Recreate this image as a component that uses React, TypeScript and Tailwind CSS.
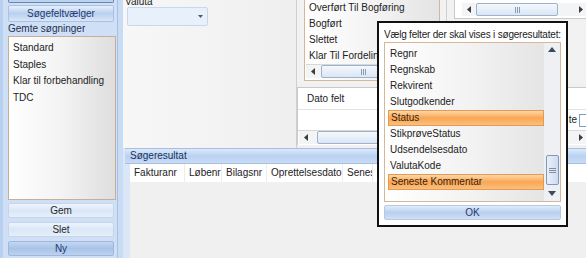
import React from 'react';

// Saved searches in the left panel
const savedSearches = ['Standard', 'Staples', 'Klar til forbehandling', 'TDC'];

const statusItems = ['Overført Til Bogføring', 'Bogført', 'Slettet', 'Klar Til Fordeling'];

const pickerFields = [
  { name: 'Regnr', selected: false },
  { name: 'Regnskab', selected: false },
  { name: 'Rekvirent', selected: false },
  { name: 'Slutgodkender', selected: false },
  { name: 'Status', selected: true },
  { name: 'StikprøveStatus', selected: false },
  { name: 'Udsendelsesdato', selected: false },
  { name: 'ValutaKode', selected: false },
  { name: 'Seneste Kommentar', selected: true },
];

// last column is clipped by the picker dialog on top of it
const resultColumns = [
  { label: 'Fakturanr', width: 'w-[55px]' },
  { label: 'Løbenr', width: 'w-[37px]' },
  { label: 'Bilagsnr', width: 'w-[45px]' },
  { label: 'Oprettelsesdato', width: 'w-[76px]' },
  { label: 'Seneste', width: 'w-[30px]' },
];

const ArrowLeft = () => (
  <svg width="5" height="7" viewBox="0 0 5 7">
    <path d="M4 0 L0 3.5 L4 7 Z" fill="#3c3c3c" />
  </svg>
);

const ArrowRight = () => (
  <svg width="5" height="7" viewBox="0 0 5 7">
    <path d="M1 0 L5 3.5 L1 7 Z" fill="#3c3c3c" />
  </svg>
);

const ArrowUp = () => (
  <svg width="8" height="5" viewBox="0 0 8 5">
    <path d="M0 5 L4 0 L8 5 Z" fill="#3c4a5c" />
  </svg>
);

const ArrowDown = () => (
  <svg width="8" height="5" viewBox="0 0 8 5">
    <path d="M0 0 L4 5 L8 0 Z" fill="#3c4a5c" />
  </svg>
);

// Horizontal scrollbar, thumb offset/width in px
const HScroll: React.FC<{ thumbLeft: number; thumbWidth: number; showRight?: boolean }> = ({
  thumbLeft,
  thumbWidth,
  showRight = true,
}) => (
  <div className="flex h-[13px] items-stretch bg-[#f3f4f6]">
    <div className="flex w-[14px] items-center justify-center">
      <ArrowLeft />
    </div>
    <div className="relative flex-1">
      <div
        className="absolute top-0 flex h-[13px] items-center justify-center rounded-[2px] border border-[#9fb2cc] bg-gradient-to-b from-[#f4f8fd] to-[#dbe6f4]"
        style={{ left: thumbLeft, width: thumbWidth }}
      >
        <div className="flex gap-[1px]">
          <div className="h-[6px] w-[1px] bg-[#8b9bb0]" />
          <div className="h-[6px] w-[1px] bg-[#8b9bb0]" />
          <div className="h-[6px] w-[1px] bg-[#8b9bb0]" />
        </div>
      </div>
    </div>
    {showRight && (
      <div className="flex w-[12px] items-center justify-center">
        <ArrowRight />
      </div>
    )}
  </div>
);

const SideButton: React.FC<{ label: string; dark?: boolean }> = ({ label, dark }) => (
  <div
    className={`flex h-[15px] items-center justify-center rounded-[2px] border ${
      dark
        ? 'border-[#9db8dc] bg-gradient-to-b from-[#c3d7f2] via-[#a9c3e8] to-[#bcd2ef] text-[#1f3a6e]'
        : 'border-[#c5d6ec] bg-gradient-to-b from-[#eef4fc] via-[#dae7f7] to-[#e7eff9] text-[#2a2a2a]'
    }`}
  >
    {label}
  </div>
);

const Sidebar = () => (
  <div className="flex w-[117px] shrink-0 flex-col border-l-[3px] border-[#b9d1f0] bg-[#cfe0f6] pl-[5px] pr-[1px]">
    <div className="mr-[2px] h-[3px] rounded-b-[2px] border-x border-b border-[#6a86ad] bg-[#bcd2ef]" />
    <div className="mr-[2px] mt-[2px] flex h-[17px] items-center justify-center rounded-[2px] border border-[#a9c1e3] bg-gradient-to-b from-[#e7f0fb] via-[#b9d0f0] to-[#d9e6f7] text-[#1f3a6e]">
      Søgefeltvælger
    </div>
    <div className="flex h-[14px] items-center text-[#1c2f4f]">Gemte søgninger</div>
    <div className="h-[164px] border border-[#c8ae94] bg-gradient-to-r from-[#ffffff] via-[#f3f3f3] to-[#dedede] pl-[4px] pt-[3px]">
      {savedSearches.map((s) => (
        <div key={s} className="flex h-[16.5px] items-center text-[#222]">
          {s}
        </div>
      ))}
    </div>
    <div className="mr-[2px] mt-[3px] flex flex-col gap-[4px]">
      <SideButton label="Gem" />
      <SideButton label="Slet" />
      <SideButton label="Ny" dark />
    </div>
  </div>
);

const TopForm = () => (
  <div className="flex h-[148px] shrink-0">
    {/* Valuta column */}
    <div className="w-[174px] shrink-0 border-r border-[#cfcfcf] bg-gradient-to-r from-[#f7f7f7] to-[#efefef] pl-[2px]">
      <div className="-mt-[3px] h-[10px] leading-[10px] text-[#222]">Valuta</div>
      <div className="ml-[2px] flex h-[19px] w-[81px] items-center justify-end rounded-[2px] border border-[#c9d7ea] bg-[#e8f0fb] pr-[4px]">
        <svg width="5" height="3" viewBox="0 0 5 3">
          <path d="M0 0 L2.5 3 L5 0 Z" fill="#4a5a70" />
        </svg>
      </div>
    </div>

    <div className="flex flex-1 flex-col">
      <div className="flex h-[83px]">
        {/* status list */}
        <div className="w-[150px] shrink-0 border-r border-[#cfcfcf] bg-[#f2f2f2] pl-[7px] pr-[6px]">
          <div className="h-[81px] border-x border-b border-[#d2b79d] bg-gradient-to-r from-[#ffffff] via-[#f4f4f4] to-[#e4e4e4]">
            {statusItems.map((s) => (
              <div key={s} className="flex h-[16px] items-center whitespace-nowrap pl-[4px] text-[#222]">
                {s}
              </div>
            ))}
            <div className="mx-[1px] border-t border-[#d8d8d8]">
              <HScroll thumbLeft={1} thumbWidth={84} showRight={false} />
            </div>
          </div>
        </div>
        {/* right grid */}
        <div className="flex-1 bg-[#f2f2f2] pl-[7px]">
          <div className="h-[19px] border-b border-l border-[#c9c9c9] bg-white pl-[7px] pt-[3px]">
            <HScroll thumbLeft={0} thumbWidth={82} />
          </div>
        </div>
      </div>

      {/* Dato felt panel */}
      <div className="mt-[4px] flex h-[58px] flex-col border-l border-t border-[#c9c9c9] bg-white">
        <div className="flex h-[22px] items-center border-b border-[#e3e3e3] pl-[9px]">
          <span className="text-[#222]">Dato felt</span>
        </div>
        <div className="flex h-[20px] items-center justify-end gap-[2px]">
          <span className="text-[#222]">te</span>
          <div className="h-[13px] w-[7px] border border-r-0 border-[#7f9db9] bg-white" />
        </div>
        <div className="border-t border-[#d8d8d8] pl-[1px]">
          <HScroll thumbLeft={4} thumbWidth={200} />
        </div>
      </div>
    </div>
  </div>
);

const Results = () => (
  <div className="flex flex-1 flex-col bg-[#dbe7f7] pl-[2px]">
    <div className="flex h-[16px] shrink-0 items-center border-y border-[#a6c0e3] bg-gradient-to-b from-[#dde9f9] via-[#bad1f1] to-[#c9dbf5] pl-[5px] text-[#15325e]">
      Søgeresultat
    </div>
    <div className="ml-[5px] flex flex-1 flex-col bg-[#f0f0f0]">
      <div className="flex h-[18px] shrink-0 bg-white">
        {resultColumns.map((c) => (
          <div
            key={c.label}
            className={`${c.width} flex shrink-0 items-center overflow-hidden whitespace-nowrap border-r border-[#ececec] pl-[4px] text-[#222]`}
          >
            {c.label}
          </div>
        ))}
      </div>
    </div>
  </div>
);

const FieldPicker = () => (
  <div className="absolute left-[377px] top-[21px] flex h-[206px] w-[191px] flex-col border-2 border-[#111] bg-white px-[5px]">
    <div className="flex h-[19px] items-end whitespace-nowrap pb-[2px] tracking-[-0.2px] text-[#222]">
      Vælg felter der skal vises i søgeresultatet:
    </div>
    <div className="flex h-[160px] border border-[#d6b898] bg-gradient-to-r from-[#ffffff] via-[#f2f2f2] to-[#e2e2e2]">
      <div className="flex-1 pl-[3px] pt-[3px]">
        {pickerFields.map((f) => (
          <div
            key={f.name}
            className={`flex h-[16px] items-center pl-[2px] ${
              f.selected
                ? 'border border-[#e79a4f] bg-gradient-to-b from-[#fdd7a8] via-[#f8a653] to-[#fbbf7f] text-[#3a2408]'
                : 'text-[#222]'
            }`}
          >
            {f.name}
          </div>
        ))}
      </div>
      <div className="flex w-[16px] flex-col items-center bg-[#eef0f3]">
        <div className="flex h-[12px] items-center">
          <ArrowUp />
        </div>
        <div className="flex-1" />
        <div className="flex h-[30px] w-[13px] items-center justify-center rounded-[2px] border border-[#8099bb] bg-gradient-to-r from-[#e9f0f9] to-[#cfdcee]">
          <div className="flex flex-col gap-[1px]">
            <div className="h-[1px] w-[7px] bg-[#7d8ea5]" />
            <div className="h-[1px] w-[7px] bg-[#7d8ea5]" />
            <div className="h-[1px] w-[7px] bg-[#7d8ea5]" />
          </div>
        </div>
        <div className="flex h-[16px] items-center">
          <ArrowDown />
        </div>
      </div>
    </div>
    <div className="mt-[3px] flex h-[15px] items-center justify-center rounded-[2px] border border-[#b4c9e6] bg-gradient-to-b from-[#e3ecf9] via-[#b9cfee] to-[#d0dff4] text-[#1f3a6e]">
      OK
    </div>
  </div>
);

export default function App() {
  return (
    <div className="relative flex h-[258px] w-[586px] overflow-hidden bg-[#f0f0f0] font-['Liberation_Sans',Arial,sans-serif] text-[10px] leading-none">
      <Sidebar />
      <div className="w-[6px] shrink-0 border-l border-[#a9c0de] bg-[#c8dcf6]" />
      <div className="flex flex-1 flex-col">
        <TopForm />
        <Results />
      </div>
      <FieldPicker />
    </div>
  );
}
